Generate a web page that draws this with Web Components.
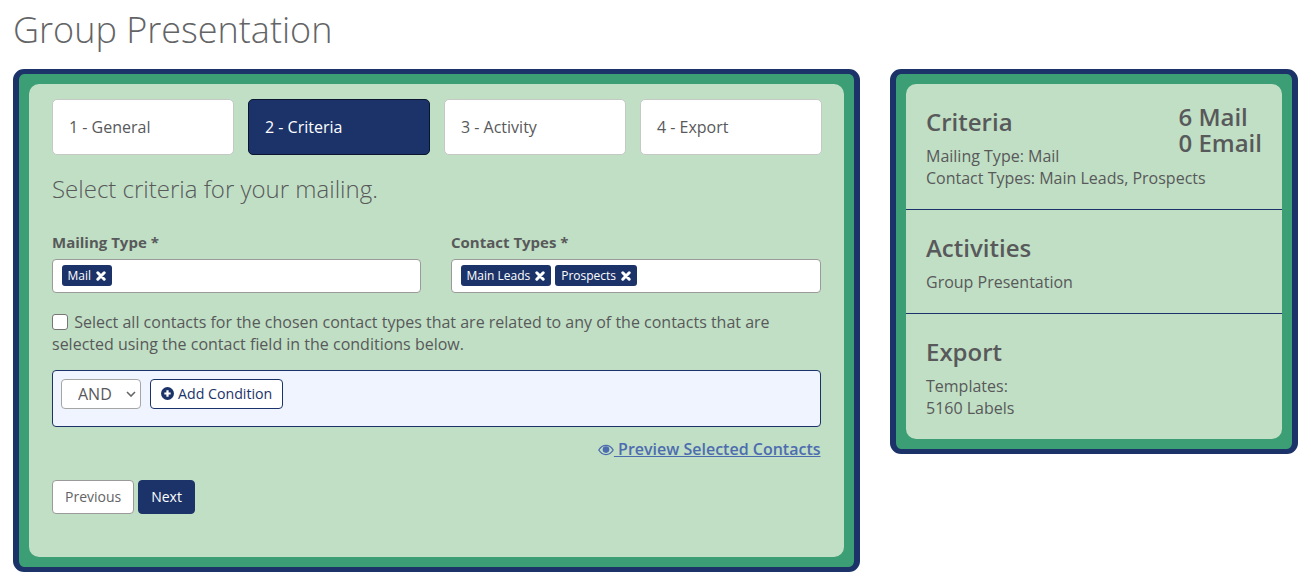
<!doctype html>
<html lang="en">
<head>
<meta charset="utf-8">
<title>Group Presentation</title>
<style>
    html, body { margin: 0; padding: 0; background: #fff; }
    body {
        font-family: "Open Sans", "Liberation Sans", sans-serif;
        font-size: 16px;
        color: #58595b;
    }
</style>
</head>
<body>

<template id="gp-page-template">
    <style>
        :host { display: block; padding: 0 13px; }
        .head { height: 69px; box-sizing: border-box; }
        .cols { display: grid; grid-template-columns: 847px 408px; gap: 30px; align-items: start; }
    </style>
    <div class="head"><slot name="title"></slot></div>
    <div class="cols"><slot></slot></div>
</template>

<template id="gp-title-template">
    <style>
        :host { display: block; font-size: 36px; font-weight: 300; line-height: 60px; color: #636466; }
    </style>
    <slot></slot>
</template>

<template id="gp-frame-template">
    <style>
        :host { display: block; border-radius: 11px; background: #3b9e74; border-style: solid; border-color: #1c3369; border-width: 5.5px 6px; box-sizing: border-box; }
        .inner { margin: 10px; background: #c1dfc4; border-radius: 10px; }
    </style>
    <div class="inner"><slot></slot></div>
</template>

<template id="gp-wizard-template">
    <style>
        :host { display: block; padding: 15px 21px 43px 23px; }
        .steps { display: grid; grid-template-columns: repeat(4, 182.3px); gap: 13.7px; }
    </style>
    <div class="steps"><slot name="steps"></slot></div>
    <slot></slot>
</template>

<template id="gp-step-template">
    <style>
        :host { display: block; }
        div {
            height: 55.5px; box-sizing: border-box; padding: 0 16px;
            display: flex; align-items: center;
            background: #fff; color: #58595b;
            border: 1px solid #c4c9c6; border-radius: 5px;
        }
        :host([active]) div { background: #1c3369; border-color: #0b1530; color: #fff; }
    </style>
    <div><slot></slot></div>
</template>

<template id="gp-lead-template">
    <style>
        :host { display: block; font-size: 24px; font-weight: 300; line-height: 36px; margin-top: 16.5px; width: 768px; }
    </style>
    <slot></slot>
</template>

<template id="gp-field-template">
    <style>
        :host { display: block; }
        label { display: block; font-size: 15px; font-weight: 700; line-height: 22px; margin: 0 0 6px; }
        .box {
            height: 33.5px; box-sizing: border-box; padding: 0 8.5px;
            display: flex; align-items: center; gap: 4px;
            background: #fff; border: 1px solid #9a9a9a; border-radius: 4px;
        }
    </style>
    <label></label>
    <div class="box"><slot></slot></div>
</template>

<template id="gp-tag-template">
    <style>
        :host {
            display: inline-flex; align-items: center; gap: 5px;
            height: 21px; box-sizing: border-box; padding: 0 6px;
            background: #1c3369; color: #fff; font-size: 12px; border-radius: 3px;
        }
        svg { width: 10px; height: 10px; display: block; }
    </style>
    <slot></slot>
    <svg viewBox="0 0 10 10" aria-hidden="true"><path d="M1.8 1.8 8.2 8.2M8.2 1.8 1.8 8.2" stroke="#fff" stroke-width="3" stroke-linecap="round" fill="none"/></svg>
</template>

<template id="gp-check-template">
    <style>
        :host { display: block; font-size: 16px; line-height: 22px; margin-top: 18.5px; width: 768.5px; }
        input { appearance: none; -webkit-appearance: none; width: 16px; height: 16px; margin: 0 2px 0 0; background: #fff; border: 1px solid #767676; border-radius: 3px; vertical-align: -2px; box-sizing: border-box; }
    </style>
    <input type="checkbox"> <slot></slot>
</template>

<template id="gp-conditions-template">
    <style>
        :host {
            display: flex; align-items: flex-start; gap: 9px;
            width: 768.5px; height: 57px; box-sizing: border-box; padding: 8px;
            margin-top: 15px;
            background: #eff4fe; border: 1px solid #1c3369; border-radius: 4px;
        }
        select {
            appearance: none; -webkit-appearance: none;
            width: 80px; height: 30px; box-sizing: border-box; padding: 0 0 0 16px;
            font: inherit; color: #58595b;
            background: #fff url("data:image/svg+xml,%3Csvg xmlns='http://www.w3.org/2000/svg' width='10' height='6'%3E%3Cpath d='M1 1l4 4 4-4' fill='none' stroke='%23666' stroke-width='1.6'/%3E%3C/svg%3E") no-repeat right 4px center;
            border: 1px solid #a5a5a5; border-radius: 4px;
        }
    </style>
    <select><option>AND</option><option>OR</option></select>
    <slot></slot>
</template>

<template id="gp-add-button-template">
    <style>
        :host {
            display: inline-flex; align-items: center; gap: 4px;
            height: 30px; box-sizing: border-box; padding: 0 10px 1px;
            background: #fff; color: #1c3369; font-size: 14.2px;
            border: 1px solid #1c3369; border-radius: 4px;
        }
        svg { width: 13px; height: 13px; display: block; }
    </style>
    <svg viewBox="0 0 14 14" aria-hidden="true"><circle cx="7" cy="7" r="7" fill="#1c3369"/><path d="M7 3.6v6.8M3.6 7h6.8" stroke="#fff" stroke-width="2.4"/></svg>
    <slot></slot>
</template>

<template id="gp-preview-link-template">
    <style>
        :host { display: block; width: 768.5px; text-align: right; margin-top: 11px; line-height: 22px; font-size: 16px; font-weight: 600; }
        a { color: #4d6cb0; text-decoration: underline; }
        svg { width: 16px; height: 12px; vertical-align: -1px; }
    </style>
    <a href="#"><svg viewBox="0 0 16 12" aria-hidden="true"><path d="M.8 6C2.6 3 5 1.4 8 1.4S13.4 3 15.2 6C13.4 9 11 10.6 8 10.6S2.6 9 .8 6Z" fill="none" stroke="#4d6cb0" stroke-width="1.3"/><circle cx="8" cy="5.6" r="3.3" fill="#4d6cb0"/></svg> <slot></slot></a>
</template>

<template id="gp-actions-template">
    <style>
        :host { display: flex; gap: 4px; margin-top: 20px; }
    </style>
    <slot></slot>
</template>

<template id="gp-button-template">
    <style>
        :host {
            display: inline-flex; align-items: center; justify-content: center;
            height: 34px; box-sizing: border-box; padding: 0 12px 1px;
            background: #fff; color: #636466; font-size: 14px;
            border: 1px solid #9a9a9a; border-radius: 4px;
        }
        :host([primary]) { background: #1c3369; border-color: #1c3369; color: #fff; font-weight: 500; }
    </style>
    <slot></slot>
</template>

<template id="gp-summary-template">
    <style>
        :host { display: block; position: relative; padding: 20px 20px 20px 20px; font-size: 16px; line-height: 22px; }
        :host(:not(:last-child)) { border-bottom: 1px solid #1c3369; }
        h2 { margin: 0 0 5px; font-size: 24px; font-weight: 600; line-height: 36px; }
        ::slotted([slot="count"]) { position: absolute; top: 20px; right: 20px; font-size: 24px; font-weight: 600; line-height: 26px; }
    </style>
    <h2></h2>
    <slot name="count"></slot>
    <slot></slot>
</template>

<script type="module">
    function register(name, template_id, on_create) {
        customElements.define(
            name,
            class extends HTMLElement {
                constructor() {
                    super();

                    const template_clone = document.getElementById(template_id).content.cloneNode(true);

                    this.attachShadow({ mode: "open" }).append(template_clone);
                }

                connectedCallback() {
                    if (on_create) on_create(this);
                }
            },
        );
    }

    register("gp-page", "gp-page-template");
    register("gp-title", "gp-title-template");
    register("gp-frame", "gp-frame-template");
    register("gp-wizard", "gp-wizard-template");
    register("gp-step", "gp-step-template");
    register("gp-lead", "gp-lead-template");
    register("gp-field", "gp-field-template", (el) => {
        el.shadowRoot.querySelector("label").textContent = el.getAttribute("label");
    });
    register("gp-tag", "gp-tag-template");
    register("gp-check", "gp-check-template");
    register("gp-conditions", "gp-conditions-template");
    register("gp-add-button", "gp-add-button-template");
    register("gp-preview-link", "gp-preview-link-template");
    register("gp-actions", "gp-actions-template");
    register("gp-button", "gp-button-template");
    register("gp-summary", "gp-summary-template", (el) => {
        el.shadowRoot.querySelector("h2").textContent = el.getAttribute("heading");
    });
</script>

<gp-page>
    <gp-title slot="title">Group Presentation</gp-title>

    <gp-frame>
        <gp-wizard>
            <gp-step slot="steps">1 - General</gp-step>
            <gp-step slot="steps" active>2 - Criteria</gp-step>
            <gp-step slot="steps">3 - Activity</gp-step>
            <gp-step slot="steps">4 - Export</gp-step>

            <gp-lead>Select criteria for your mailing.</gp-lead>

            <div style="display: grid; grid-template-columns: 368.5px 369.5px; gap: 30.5px; margin-top: 24px; width: 768.5px;">
                <gp-field label="Mailing Type *">
                    <gp-tag>Mail</gp-tag>
                </gp-field>
                <gp-field label="Contact Types *">
                    <gp-tag>Main Leads</gp-tag>
                    <gp-tag>Prospects</gp-tag>
                </gp-field>
            </div>

            <gp-check>Select all contacts for the chosen contact types that are related to any of the contacts that are selected using the contact field in the conditions below.</gp-check>

            <gp-conditions>
                <gp-add-button>Add Condition</gp-add-button>
            </gp-conditions>

            <gp-preview-link>Preview Selected Contacts</gp-preview-link>

            <gp-actions>
                <gp-button>Previous</gp-button>
                <gp-button primary>Next</gp-button>
            </gp-actions>
        </gp-wizard>
    </gp-frame>

    <gp-frame>
        <gp-summary heading="Criteria">
            <div slot="count">6 Mail<br>0 Email</div>
            Mailing Type: Mail<br>
            Contact Types: Main Leads, Prospects
        </gp-summary>
        <gp-summary heading="Activities">Group Presentation</gp-summary>
        <gp-summary heading="Export">Templates:<br>5160 Labels</gp-summary>
    </gp-frame>
</gp-page>

</body>
</html>
